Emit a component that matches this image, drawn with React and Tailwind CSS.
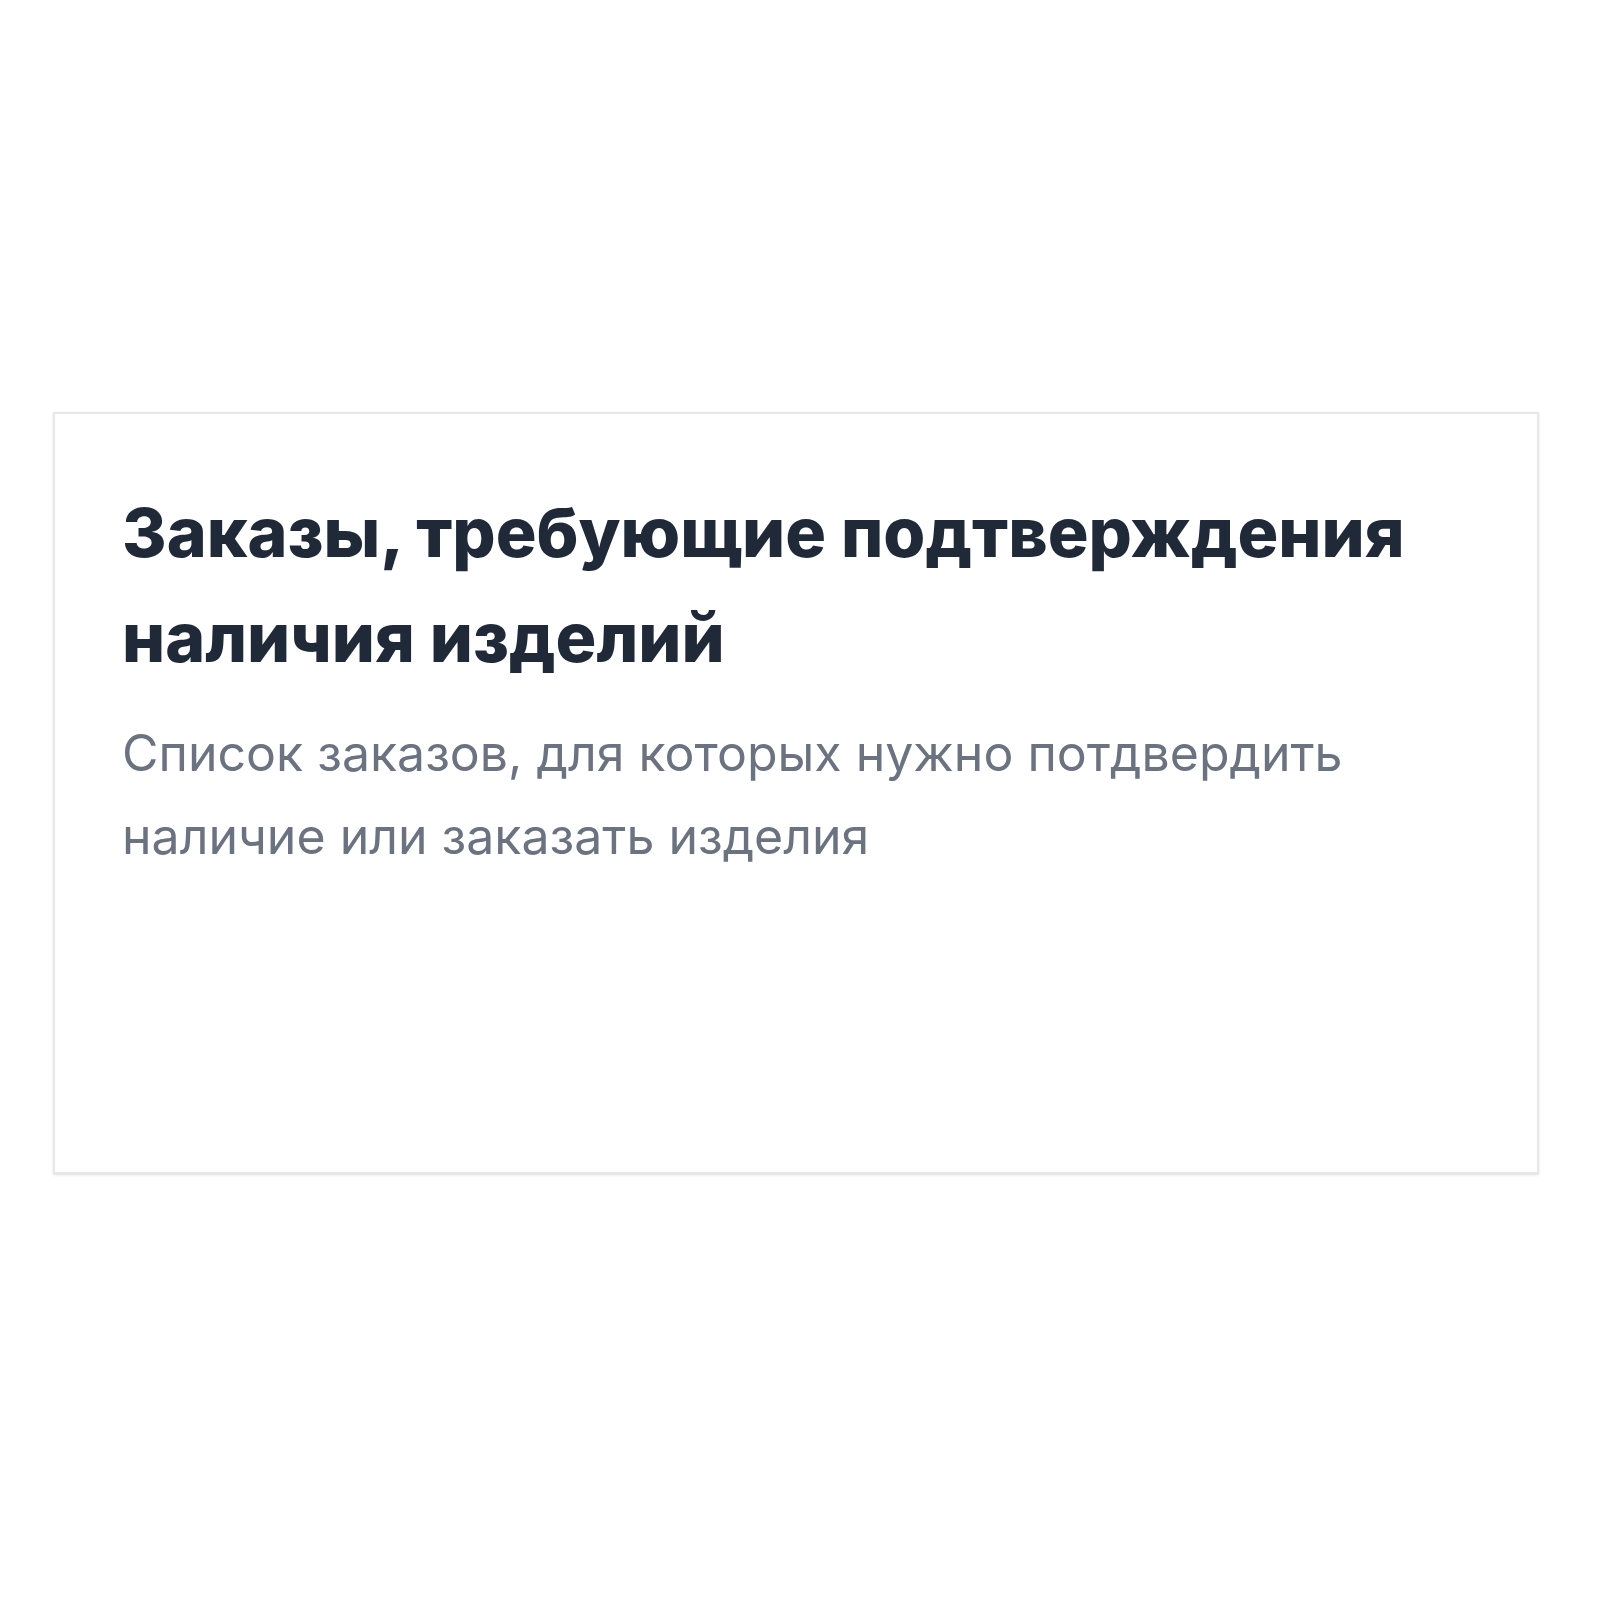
import React from 'react';

const OrdersNotice = () => {
  return (
    <div className="min-h-screen bg-white px-[53px] pt-[412px] font-['Inter','Noto_Sans',sans-serif]">
      <div className="w-[1486px] h-[762px] border-2 border-[#e5e7eb] bg-white shadow-sm px-[67px] pt-[66px]">
        <h2 className="text-[68px] leading-[105px] font-extrabold text-[#1f2937]">
          Заказы, требующие подтверждения наличия изделий
        </h2>
        <p className="mt-[22px] text-[50px] leading-[83px] text-[#6b7280]">
          Список заказов, для которых нужно потдвердить наличие или заказать изделия
        </p>
      </div>
    </div>
  );
};

export default function App() {
  return <OrdersNotice />;
}
